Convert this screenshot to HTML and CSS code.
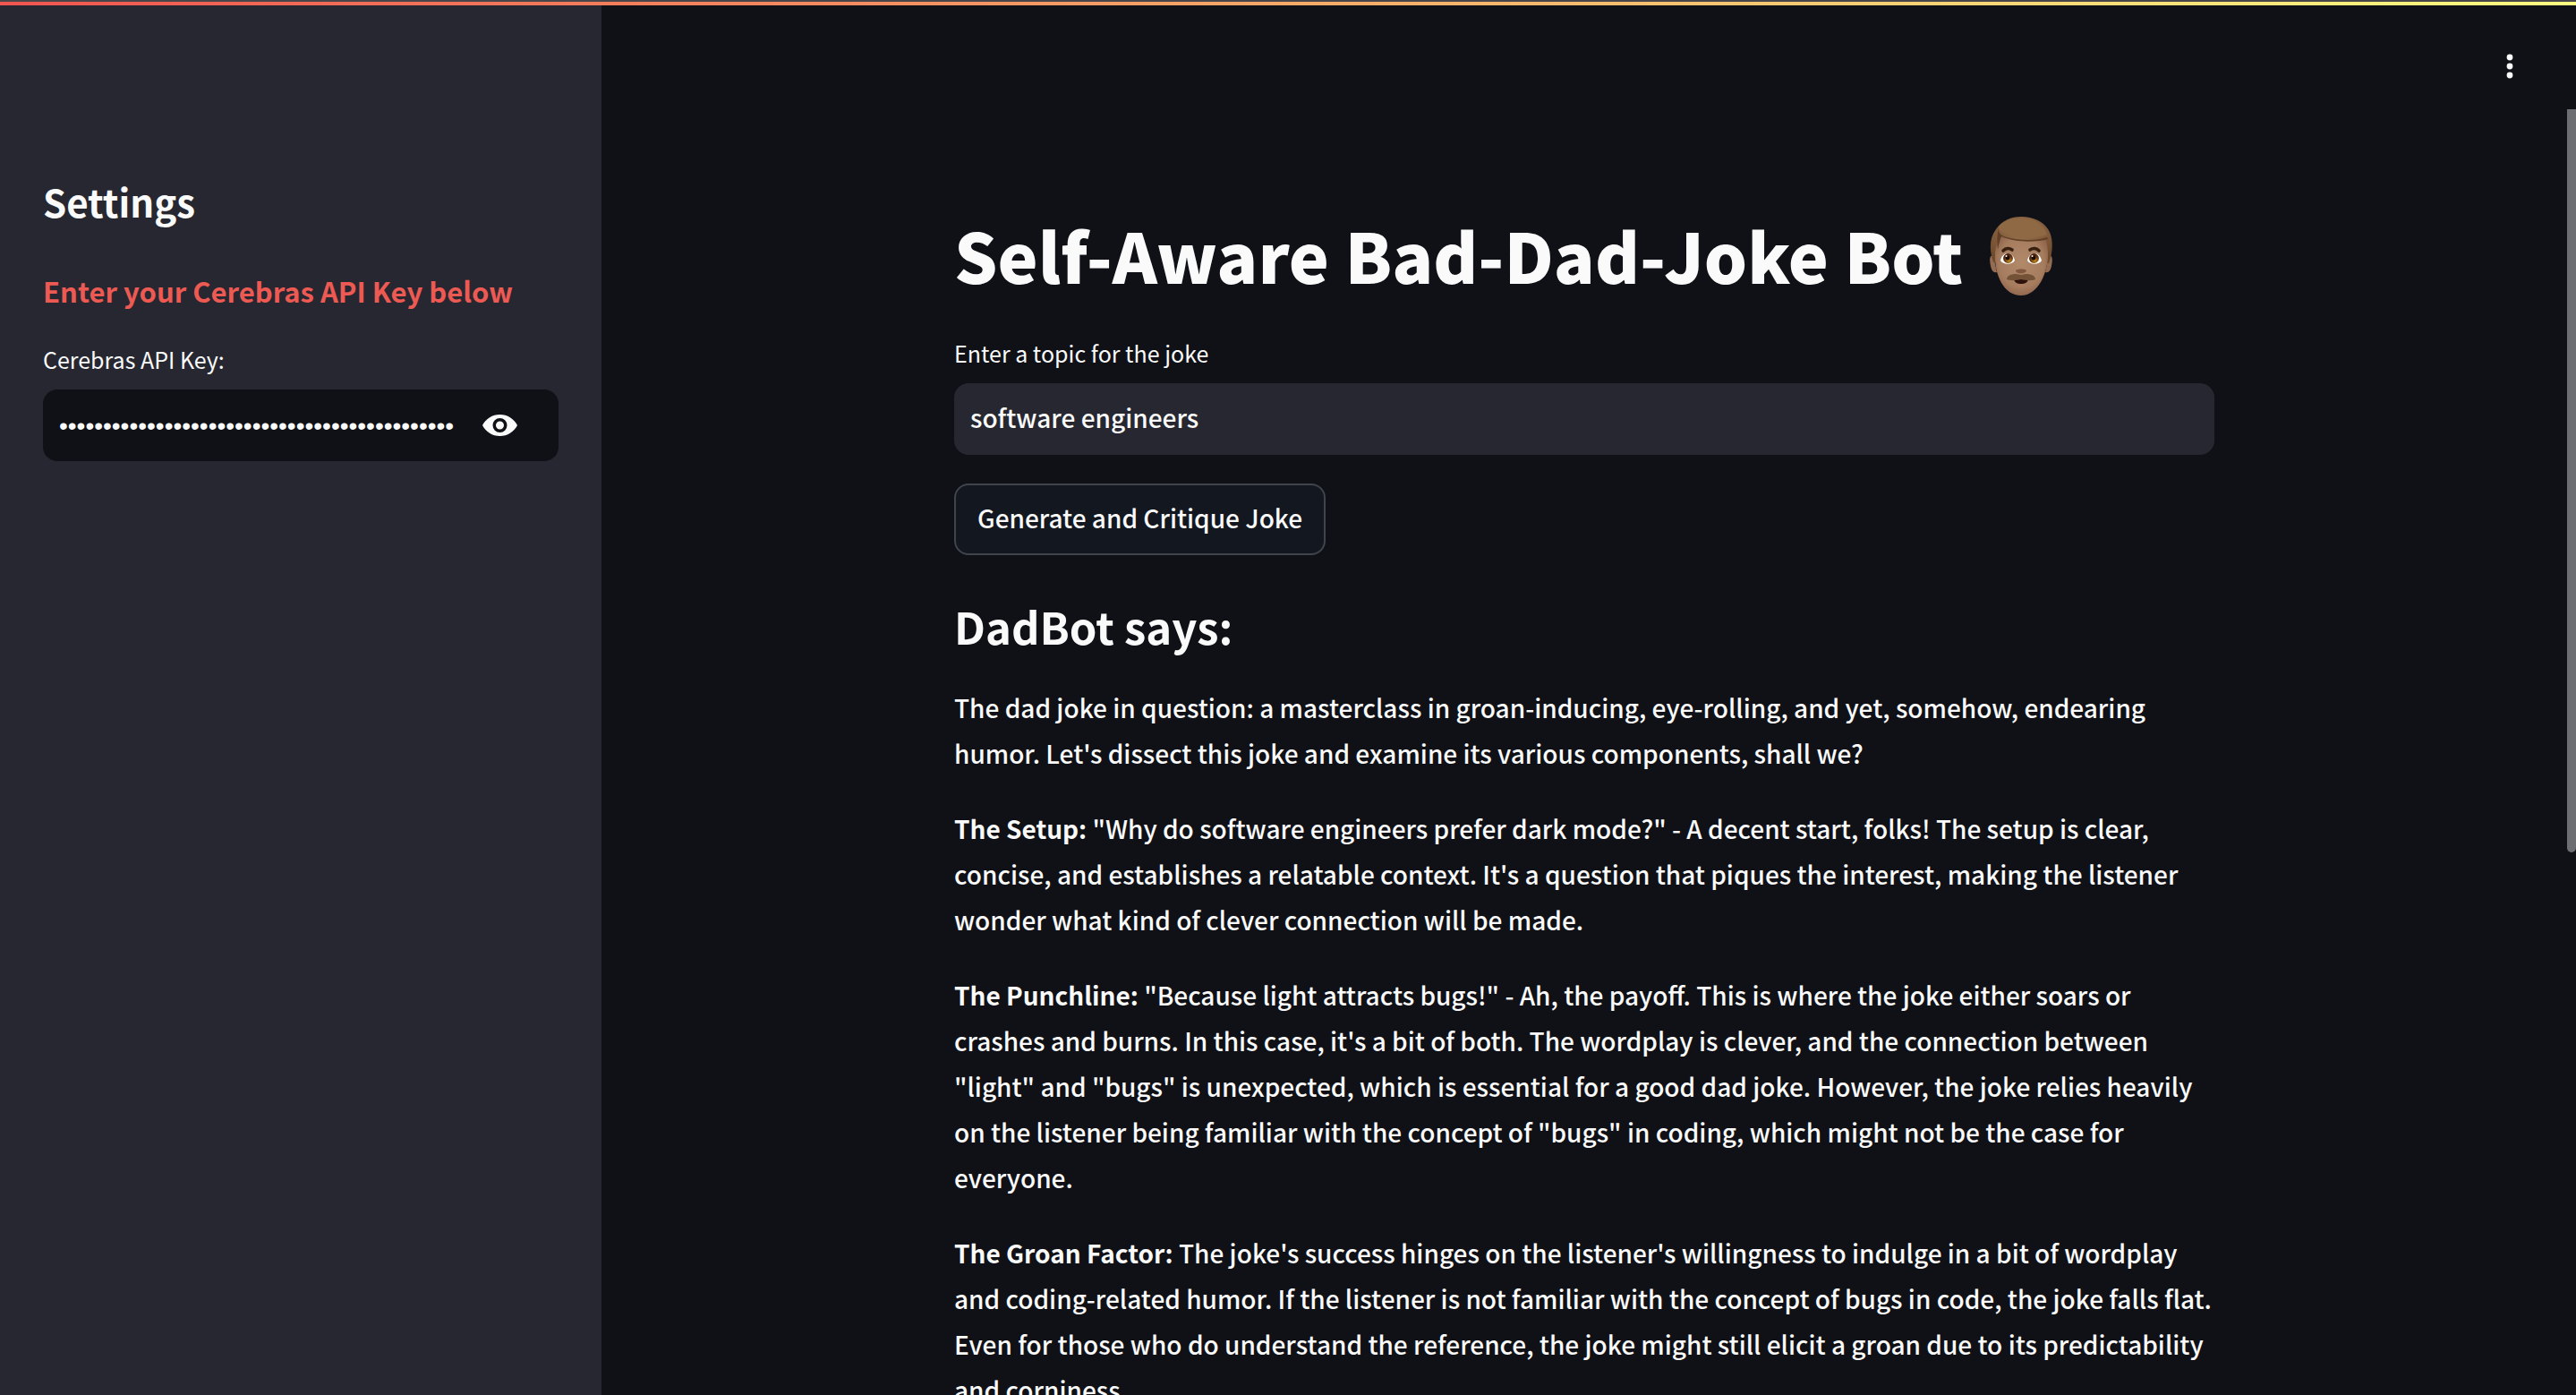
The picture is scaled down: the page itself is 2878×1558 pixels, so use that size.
FILE: index.html
```html
<!DOCTYPE html>
<html lang="en">
<head>
<meta charset="utf-8">
<title>Self-Aware Bad-Dad-Joke Bot</title>
<link rel="stylesheet" href="styles.css">
</head>
<body>
<div class="decoration"></div>
<div class="app">
  <aside class="sidebar">
    <h2 class="sidebar-title">Settings</h2>
    <h3 class="sidebar-notice">Enter your Cerebras API Key below</h3>
    <label class="label" for="api-key">Cerebras API Key:</label>
    <div class="key-field">
      <input class="key-input" id="api-key" type="password" value="csk-0000000000000000000000000000000000000000000000">
      <button class="icon-button" type="button" aria-label="Show password text">
        <svg class="eye" viewBox="0 0 39 24"><path fill="currentColor" fill-rule="evenodd" d="M0 12C4 4.500 11 0 19.500 0S35 4.500 39 12C35 19.500 28 24 19.500 24S4 19.500 0 12ZM19.500 4a8 8 0 1 0 0 16a8 8 0 0 0 0-16ZM19.500 7.500a4.500 4.500 0 1 1 0 9a4.500 4.500 0 0 1 0-9Z"/></svg>
      </button>
    </div>
  </aside>
  <main class="main">
    <header class="toolbar">
      <button class="icon-button" type="button" aria-label="Main menu">
        <svg class="dots" viewBox="0 0 8 28" fill="currentColor"><circle cx="4" cy="4" r="3.400"/><circle cx="4" cy="14" r="3.400"/><circle cx="4" cy="24" r="3.400"/></svg>
      </button>
    </header>
    <div class="content">
      <h1 class="title">Self-Aware Bad-Dad-Joke Bot
        <svg class="face" viewBox="0 0 70 88" role="img" aria-label="Man with mustache">
          <defs>
            <radialGradient id="skin" cx=".5" cy=".45" r=".6"><stop offset="0" stop-color="#b18a6a"/><stop offset=".7" stop-color="#a67c5e"/><stop offset="1" stop-color="#8a5f48"/></radialGradient>
            <radialGradient id="hair" cx=".5" cy=".3" r=".7"><stop offset="0" stop-color="#9b7350"/><stop offset="1" stop-color="#6f4b2d"/></radialGradient>
            <radialGradient id="iris" cx=".6" cy=".75" r=".7"><stop offset="0" stop-color="#c08a1e"/><stop offset=".6" stop-color="#6a3a10"/><stop offset="1" stop-color="#3a1708"/></radialGradient>
          </defs>
          <path fill="#946c52" d="M4 43C-1 43 0 50 1 55s3 8 7 7zM66 43c5 0 4 7 3 12s-3 8-7 7z"/>
          <path fill="url(#hair)" d="M4 51C-1 36 0 23 7 14 14 4 24 0 35 0c17 0 29 8 33 20 3 10 2 22-2 32z"/>
          <path fill="url(#skin)" d="M6 40C7 34 9 25 12 21c14 7 36 8 50 3 2 6 3 12 3 18 0 21-11 46-30 46S5 66 6 40Z"/>
          <path fill="#5b3a20" opacity=".85" d="M10 12c-1 6 2 9 9 11 14 4 34 4 45 0l1 2c-13 4-38 4-52-3-2 5-3 10-4 15-1-8-1-17 1-25Z"/>
          <path fill="#8f6844" d="M10 11C17 3 26 2 36 2c15 0 24 7 28 18-13 5-33 4-44 0-7-3-10-5-10-9Z"/>
          <path fill="none" stroke="#37200f" stroke-width="3.600" stroke-linecap="round" d="M15 38c3-3 7-3 10-1M45 37c3-2 7-2 10 1"/>
          <path fill="#fff" d="M12 49c1-5 4-8 8-8s7 3 8 8c-3 5-13 5-16 0ZM42 49c1-5 4-8 8-8s7 3 8 8c-3 5-13 5-16 0Z"/>
          <circle cx="20.500" cy="46.500" r="5.400" fill="url(#iris)"/><circle cx="49.500" cy="46.500" r="5.400" fill="url(#iris)"/>
          <circle cx="20" cy="46" r="2.400" fill="#1d0904"/><circle cx="49" cy="46" r="2.400" fill="#1d0904"/>
          <circle cx="18.500" cy="44" r="1" fill="#fff"/><circle cx="47.500" cy="44" r="1" fill="#fff"/>
          <path fill="#82573f" d="M29 60c1-2 11-2 12 0 0 4-12 5-12 0Z"/>
          <path fill="#2e120b" d="M27 70h16c-1 4-4 5-8 5s-7-1-8-5Z"/>
          <path fill="#c07b69" d="M29 75c4 3 8 3 12 0-2 4-10 4-12 0Z"/>
          <path fill="#735237" d="M19 70c0-4 5-6 10-6 3 0 4 1 6 1s3-1 6-1c5 0 10 2 10 6-5 2-11 1-16 0-5 1-11 2-16 0Z"/>
        </svg>
      </h1>
      <form class="form">
        <label class="label" for="topic">Enter a topic for the joke</label>
        <input class="topic-input" id="topic" type="text" value="software engineers">
        <button class="generate" type="button">Generate and Critique Joke</button>
      </form>
      <section class="answer">
        <h2 class="answer-title">DadBot says:</h2>
        <p>The dad joke in question: a masterclass in groan-inducing, eye-rolling, and yet, somehow, endearing humor. Let's dissect this joke and examine its various components, shall we?</p>
        <p><strong>The Setup:</strong> "Why do software engineers prefer dark mode?" - A decent start, folks! The setup is clear, concise, and establishes a relatable context. It's a question that piques the interest, making the listener wonder what kind of clever connection will be made.</p>
        <p><strong>The Punchline:</strong> "Because light attracts bugs!" - Ah, the payoff. This is where the joke either soars or crashes and burns. In this case, it's a bit of both. The wordplay is clever, and the connection between "light" and "bugs" is unexpected, which is essential for a good dad joke. However, the joke relies heavily on the listener being familiar with the concept of "bugs" in coding, which might not be the case for everyone.</p>
        <p><strong>The Groan Factor:</strong> The joke's success hinges on the listener's willingness to indulge in a bit of wordplay and coding-related humor. If the listener is not familiar with the concept of bugs in code, the joke falls flat. Even for those who do understand the reference, the joke might still elicit a groan due to its predictability and corniness.</p>
      </section>
    </div>
    <div class="scroll-thumb"></div>
  </main>
</div>
</body>
</html>
```
FILE: styles.css
```css
* { box-sizing: border-box; }

body {
  margin: 0;
  height: 100vh;
  display: flex;
  flex-direction: column;
  overflow: hidden;
  background: #0f1116;
  color: #fafafa;
  font-family: "Noto Sans CJK SC", "Noto Sans", sans-serif;
  font-size: 28px;
  font-weight: 500;
  line-height: 51px;
}

h1, h2, h3, p { margin: 0; }
input, button { font: inherit; color: inherit; border: 0; outline: 0; }

.decoration {
  flex: none;
  height: 6px;
  border-top: 2px solid #48464b;
  background: linear-gradient(90deg, #f05550, #fffd80) padding-box;
}

.app { flex: 1; min-height: 0; display: flex; }

.sidebar {
  flex: none;
  width: 672px;
  padding: 190px 48px 0;
  background: #262730;
}

.sidebar-title { font-size: 42px; font-weight: 700; line-height: 58px; }

.sidebar-notice {
  margin: 45px 0 31px;
  color: #ed5a53;
  font-size: 31px;
  font-weight: 700;
  line-height: 51px;
}

.label {
  display: block;
  margin-bottom: 14px;
  font-size: 25px;
  font-weight: 400;
  line-height: 40px;
}

.key-field {
  display: flex;
  align-items: center;
  height: 80px;
  padding: 0 46px 0 18px;
  border-radius: 16px;
  background: #0f1116;
}

.key-input {
  flex: 1;
  min-width: 0;
  padding: 0;
  background: none;
  font-family: "Liberation Sans", sans-serif;
  font-size: 28px;
}

.icon-button {
  display: flex;
  padding: 0;
  background: none;
  cursor: pointer;
}

.key-field .icon-button { margin-left: 32px; }
.eye { width: 39px; height: 24px; }
.dots { width: 8px; height: 28px; }

.main { position: relative; flex: 1; min-width: 0; padding-right: 10px; }

.toolbar {
  display: flex;
  justify-content: flex-end;
  align-items: center;
  height: 116px;
  padding: 20px 60px 0 0;
}

.content { width: 100%; max-width: 1408px; margin: 0 auto; padding-top: 98px; }

.title {
  display: flex;
  align-items: center;
  gap: 30px;
  font-size: 76px;
  font-weight: 900;
  line-height: 128px;
}

.face { width: 70px; height: 88px; margin-top: 4px; }

.form { padding-top: 26px; }

.topic-input {
  display: block;
  width: 100%;
  height: 80px;
  padding: 0 18px 4px;
  border-radius: 16px;
  background: #262730;
}

.generate {
  height: 80px;
  margin-top: 32px;
  padding: 0 24px 4px;
  border: 2px solid #41444c;
  border-radius: 16px;
  background: #131720;
  cursor: pointer;
}

.answer {
  display: flex;
  flex-direction: column;
  gap: 33px;
  padding-top: 46px;
}

.answer-title { font-size: 49px; font-weight: 700; line-height: 66px; }

.scroll-thumb {
  position: absolute;
  top: 116px;
  right: 0;
  width: 10px;
  height: 53.5%;
  border-radius: 0 0 5px 5px;
  background: #6d6e72;
}
```
